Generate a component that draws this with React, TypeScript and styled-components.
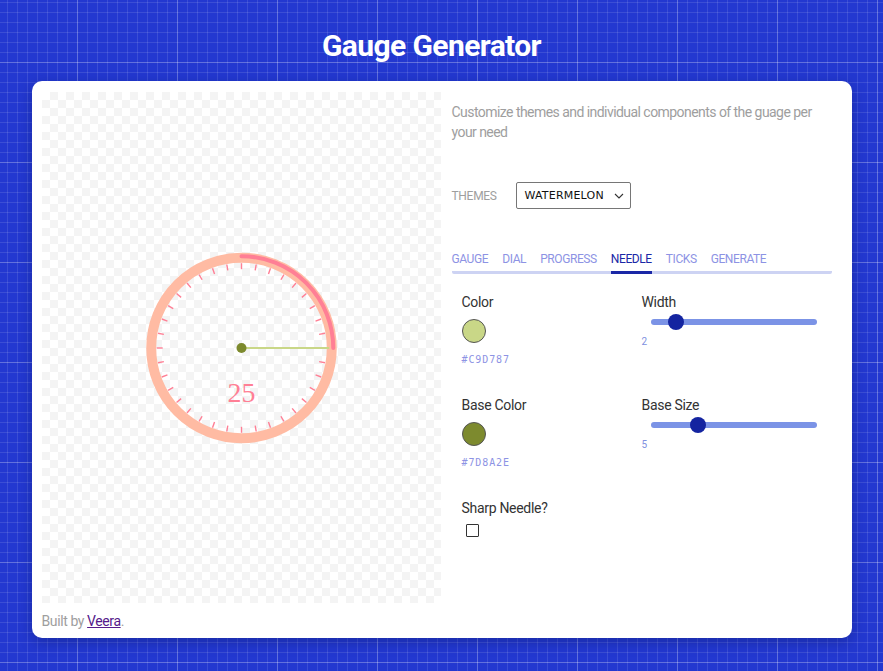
import styled, { createGlobalStyle } from "styled-components";

const GlobalStyle = createGlobalStyle`
    html, body {
        margin: 0;
        padding: 0;
    }
    body {
        min-height: 671px;
        font-family: Roboto, "Liberation Sans", sans-serif;
        background-color: #2338d0;
        background-image:
            linear-gradient(rgba(255, 255, 255, 0.2) 1px, transparent 1px),
            linear-gradient(90deg, rgba(255, 255, 255, 0.2) 1px, transparent 1px),
            linear-gradient(rgba(255, 255, 255, 0.11) 1px, transparent 1px),
            linear-gradient(90deg, rgba(255, 255, 255, 0.11) 1px, transparent 1px);
        background-size: 100px 100px, 100px 100px, 10px 10px, 10px 10px;
        background-position: 77px 62px, 77px 62px, 7px 2px, 7px 2px;
    }
`;

const Page = styled.div`
    display: flex;
    flex-direction: column;
    align-items: center;
    padding-top: 28px;
`;

const Title = styled.h1`
    margin: 0 20px 17px 0;
    color: #fff;
    font-size: 30px;
    font-weight: 700;
    letter-spacing: -0.6px;
    line-height: 36px;
`;

const Card = styled.div`
    width: 820px;
    box-sizing: border-box;
    background: #fff;
    border-radius: 10px;
    padding: 11px 10px 8px;
    box-shadow: 0 4px 14px rgba(10, 20, 90, 0.35);
`;

const Columns = styled.div`
    display: grid;
    grid-template-columns: 399px 1fr;
    gap: 11px;
`;

const Canvas = styled.div`
    height: 511px;
    display: flex;
    align-items: center;
    justify-content: center;
    background-color: #fff;
    background-image:
        linear-gradient(45deg, #f4f4f4 25%, transparent 25%, transparent 75%, #f4f4f4 75%),
        linear-gradient(45deg, #f4f4f4 25%, transparent 25%, transparent 75%, #f4f4f4 75%);
    background-size: 16px 16px;
    background-position: 0 0, 8px 8px;
`;

const Side = styled.div`
    padding-right: 10px;
`;

const Intro = styled.p`
    margin: 10px 0 0;
    color: #9e9e9e;
    font-size: 14px;
    line-height: 20px;
    letter-spacing: -0.55px;
`;

const ThemeRow = styled.div`
    display: flex;
    align-items: center;
    margin-top: 40px;
`;

const SmallLabel = styled.span`
    width: 64px;
    color: #9e9e9e;
    font-size: 12px;
    text-transform: uppercase;
    letter-spacing: -0.3px;
`;

const Select = styled.div`
    width: 115px;
    height: 27px;
    box-sizing: border-box;
    border: 1px solid #767676;
    border-radius: 2px;
    display: flex;
    align-items: center;
    justify-content: space-between;
    padding: 0 6px 0 8px;
    font-family: "DejaVu Sans", sans-serif;
    font-size: 11px;
    letter-spacing: 0.2px;
    color: #111;
`;

const Tabs = styled.div`
    display: flex;
    gap: 14px;
    margin-top: 43px;
    border-bottom: 3px solid #cdd3f3;
    border-radius: 2px;
`;

const Tab = styled.div<{ $active?: boolean }>`
    font-size: 12px;
    text-transform: uppercase;
    letter-spacing: -0.4px;
    padding-bottom: 5px;
    margin-bottom: -3px;
    color: ${p => (p.$active ? "#1a27a6" : "#8d93e4")};
    border-bottom: 3px solid ${p => (p.$active ? "#1a27a6" : "transparent")};
`;

const Panel = styled.div`
    display: grid;
    grid-template-columns: 180px 1fr;
    row-gap: 31px;
    padding: 19px 10px 0;
`;

const Field = styled.div`
    display: flex;
    flex-direction: column;
    align-items: flex-start;
`;

const FieldLabel = styled.div`
    color: #333;
    font-size: 14px;
    letter-spacing: -0.3px;
    line-height: 18px;
`;

const Swatch = styled.div<{ $color: string }>`
    width: 24px;
    height: 24px;
    margin-top: 8px;
    border-radius: 50%;
    box-sizing: border-box;
    border: 1px solid #555;
    background: ${p => p.$color};
`;

const Hex = styled.div`
    margin-top: 11px;
    font-family: "DejaVu Sans Mono", monospace;
    font-size: 10px;
    letter-spacing: 0.9px;
    color: #8d93e4;
`;

const Track = styled.div`
    position: relative;
    width: 166px;
    height: 6px;
    margin: 8px 0 0 9px;
    border-radius: 3px;
    background: #7b93e6;
`;

const Thumb = styled.div`
    position: absolute;
    top: -5px;
    width: 16px;
    height: 16px;
    margin-left: -8px;
    border-radius: 50%;
    background: #1424a0;
`;

const Value = styled.div`
    margin-top: 11px;
    font-size: 10px;
    color: #8090e0;
`;

const Check = styled.div`
    width: 13px;
    height: 13px;
    margin: 7px 0 0 4px;
    box-sizing: border-box;
    border: 1px solid #333;
    border-radius: 1px;
`;

const Footer = styled.div`
    margin-top: 9px;
    color: #9e9e9e;
    font-size: 14px;
    letter-spacing: -0.4px;
    line-height: 18px;

    a {
        color: #551a8b;
    }
`;

function Gauge() {
    const cx = 200;
    const cy = 200;
    const ticks = Array.from({ length: 36 }, (_, i) => {
        const a = (i * 10 * Math.PI) / 180;
        return {
            x1: cx + 79 * Math.cos(a),
            y1: cy + 79 * Math.sin(a),
            x2: cx + 85 * Math.cos(a),
            y2: cy + 85 * Math.sin(a),
        };
    });

    return (
        <svg width="400" height="400" viewBox="0 0 400 400">
            <circle cx={cx} cy={cy} r={90.5} fill="none" stroke="#ffbba3" strokeWidth={10} />
            <path
                d={`M ${cx} ${cy - 92} A 92 92 0 0 1 ${cx + 92} ${cy}`}
                fill="none"
                stroke="#ff7f95"
                strokeWidth={4}
                strokeLinecap="round"
            />
            {ticks.map((t, i) => (
                <line key={i} {...t} stroke="#ff7f95" strokeWidth={1.4} />
            ))}
            <text
                x={cx}
                y={cy + 54}
                textAnchor="middle"
                fontFamily="'Liberation Serif', serif"
                fontSize={28}
                fill="#ff7f95"
            >
                25
            </text>
            <line x1={cx} y1={cy} x2={cx + 88} y2={cy} stroke="#c9d787" strokeWidth={2} />
            <circle cx={cx} cy={cy} r={5} fill="#7d8a2e" />
        </svg>
    );
}

const tabs = ["Gauge", "Dial", "Progress", "Needle", "Ticks", "Generate"];

export default function App() {
    return (
        <>
            <GlobalStyle />
            <Page>
                <Title>Gauge Generator</Title>
                <Card>
                    <Columns>
                        <Canvas>
                            <Gauge />
                        </Canvas>
                        <Side>
                            <Intro>Customize themes and individual components of the guage per your need</Intro>
                            <ThemeRow>
                                <SmallLabel>Themes</SmallLabel>
                                <Select>
                                    WATERMELON
                                    <svg width="10" height="6" viewBox="0 0 10 6">
                                        <path d="M1 1 L5 5 L9 1" fill="none" stroke="#333" strokeWidth="1.1" />
                                    </svg>
                                </Select>
                            </ThemeRow>
                            <Tabs>
                                {tabs.map(t => (
                                    <Tab key={t} $active={t === "Needle"}>{t}</Tab>
                                ))}
                            </Tabs>
                            <Panel>
                                <Field>
                                    <FieldLabel>Color</FieldLabel>
                                    <Swatch $color="#c9d787" />
                                    <Hex>#C9D787</Hex>
                                </Field>
                                <Field>
                                    <FieldLabel>Width</FieldLabel>
                                    <Track>
                                        <Thumb style={{ left: 25 }} />
                                    </Track>
                                    <Value>2</Value>
                                </Field>
                                <Field>
                                    <FieldLabel>Base Color</FieldLabel>
                                    <Swatch $color="#7d8a2e" />
                                    <Hex>#7D8A2E</Hex>
                                </Field>
                                <Field>
                                    <FieldLabel>Base Size</FieldLabel>
                                    <Track>
                                        <Thumb style={{ left: 47 }} />
                                    </Track>
                                    <Value>5</Value>
                                </Field>
                                <Field>
                                    <FieldLabel>Sharp Needle?</FieldLabel>
                                    <Check />
                                </Field>
                            </Panel>
                        </Side>
                    </Columns>
                    <Footer>
                        Built by <a href="#">Veera</a>.
                    </Footer>
                </Card>
            </Page>
        </>
    );
}
